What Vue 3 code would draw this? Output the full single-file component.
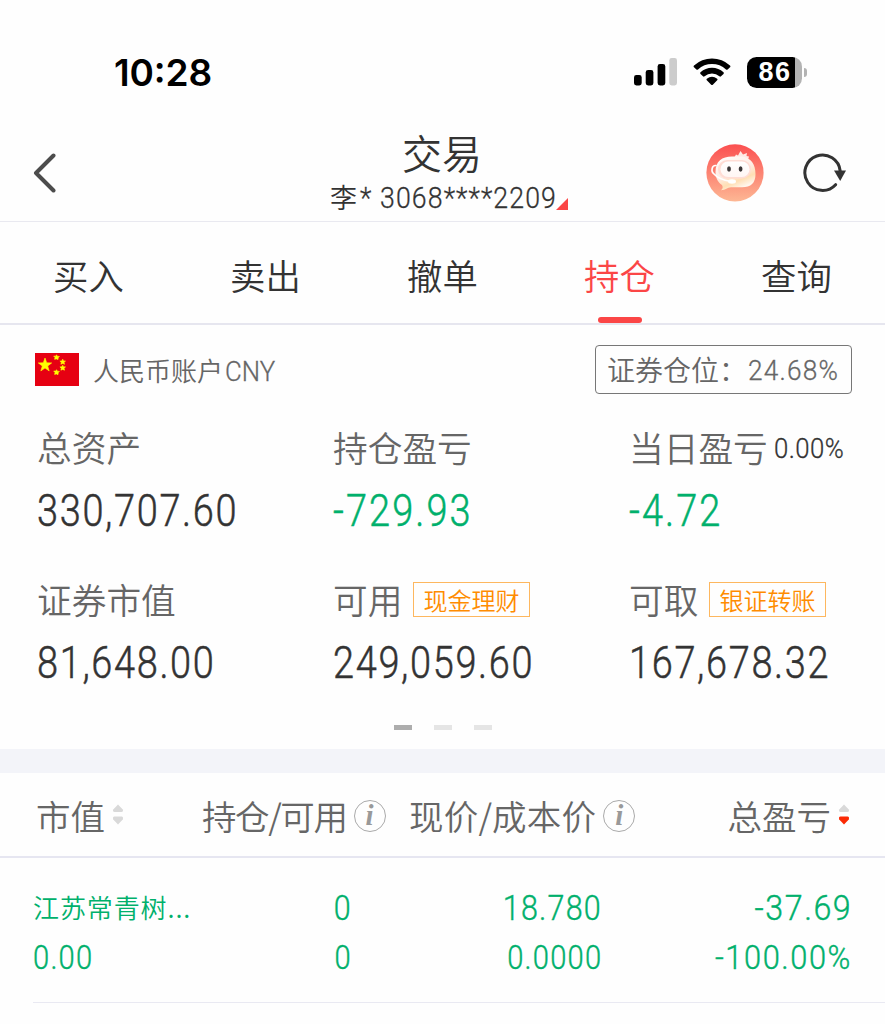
<script setup>
import { ref } from 'vue'

const tabs = ['买入', '卖出', '撤单', '持仓', '查询']
const activeTab = ref('持仓')

const assets = [
  { label: '总资产', value: '330,707.60' },
  { label: '持仓盈亏', value: '-729.93', down: true },
  { label: '当日盈亏', value: '-4.72', down: true, rate: '0.00%' },
  { label: '证券市值', value: '81,648.00' },
  { label: '可用', value: '249,059.60', action: '现金理财' },
  { label: '可取', value: '167,678.32', action: '银证转账' },
]

const positions = [
  {
    name: '江苏常青树...',
    marketValue: '0.00',
    held: '0',
    available: '0',
    price: '18.780',
    cost: '0.0000',
    profit: '-37.69',
    rate: '-100.00%',
  },
]
</script>

<template>
  <div class="page">
    <div class="status">
      <span class="time">10:28</span>
      <div class="status-icons">
        <svg class="signal" width="43" height="28" viewBox="0 0 43 28">
          <rect x="0" y="17" width="7.7" height="10.5" rx="2.4" />
          <rect x="11.7" y="12" width="7.7" height="15.5" rx="2.4" />
          <rect x="23.6" y="6" width="7.7" height="21.5" rx="2.4" />
          <rect x="35.3" y="0" width="7.7" height="27.5" rx="2.4" fill="#ccc" />
        </svg>
        <svg class="wifi" width="38" height="28" viewBox="0 0 38 28">
          <path d="M1 7.6 A26.3 26.3 0 0 1 37 7.6 Q37.8 8.4 37 9.2 L34.6 11.5 Q33.8 12.2 33 11.5 A20.8 20.8 0 0 0 5 11.5 Q4.2 12.2 3.4 11.5 L1 9.2 Q0.2 8.4 1 7.6 Z" />
          <path d="M7.5 14.3 A16.8 16.8 0 0 1 30.5 14.3 Q31.3 15.1 30.5 15.9 L28 18.3 Q27.2 19 26.4 18.3 A11.3 11.3 0 0 0 11.6 18.3 Q10.8 19 10 18.3 L7.5 15.9 Q6.7 15.1 7.5 14.3 Z" />
          <path d="M13.8 20.8 A8.4 8.4 0 0 1 24.2 20.8 Q25 21.5 24.2 22.3 L19.8 26.7 Q19 27.4 18.2 26.7 L13.8 22.3 Q13 21.5 13.8 20.8 Z" />
        </svg>
        <div class="battery">
          <div class="battery-body">86</div>
          <div class="battery-cap"></div>
        </div>
      </div>
    </div>

    <header class="header">
      <svg class="back" width="24" height="40" viewBox="0 0 24 40">
        <path d="M20.5 2.5 L3 20 L20.5 37.5" fill="none" stroke="#4c4c4c" stroke-width="4" stroke-linecap="round" stroke-linejoin="round" />
      </svg>
      <div class="heading">
        <h1>交易</h1>
        <div class="account-no">
          <span>李<i>* 3068****2209</i></span>
          <svg width="12" height="12" viewBox="0 0 12 12"><path d="M12 0 V12 H0 Z" fill="#fb4646" /></svg>
        </div>
      </div>
      <div class="header-actions">
        <svg class="robot" width="58" height="58" viewBox="0 0 58 58">
          <defs>
            <linearGradient id="robotBg" x1="0" y1="0" x2="0" y2="1">
              <stop offset="0" stop-color="#fb4f50" />
              <stop offset="1" stop-color="#fdb794" />
            </linearGradient>
            <linearGradient id="robotBody" x1="0" y1="0" x2="0.5" y2="1">
              <stop offset="0" stop-color="#fff" />
              <stop offset="0.55" stop-color="#ffece4" />
              <stop offset="0.8" stop-color="#ffdfb4" />
              <stop offset="1" stop-color="#fff6ed" />
            </linearGradient>
            <linearGradient id="robotFace" x1="0" y1="0" x2="0" y2="1">
              <stop offset="0" stop-color="#fff" />
              <stop offset="1" stop-color="#fff6f3" />
            </linearGradient>
          </defs>
          <circle cx="29" cy="28.8" r="28.6" fill="url(#robotBg)" />
          <path d="M28 14 L30 10.5 L32 11.5 L34.5 7 L37 10.5 L41 9 L40.5 12 L43 12.5 L42 16 Z" fill="#ffe9e4" />
          <path d="M26 12.5 H36 C45 14 49.5 20 49.5 30 C49.5 39 45 43.3 36 43.3 H25 C21 43.5 20 46 15 46.3 C17 44.5 17 43 16 41 C12 38.5 9.5 34 9.5 28 C9.5 17 16 12.5 26 12.5 Z" fill="url(#robotBody)" />
          <rect x="12" y="16" width="33" height="18.5" rx="9" fill="#ffddd5" />
          <rect x="14.5" y="17.5" width="29" height="15.5" rx="7.7" fill="url(#robotFace)" />
          <path d="M10 21.5 C5.5 21 5 27.5 7.5 29.5 C12 35 19 36.5 25 37.5" fill="none" stroke="#fff" stroke-width="1.6" stroke-linecap="round" />
          <ellipse cx="26" cy="37.5" rx="4" ry="2.2" fill="#fff" />
          <ellipse cx="23" cy="25" rx="1.9" ry="2.7" fill="#3b3839" />
          <ellipse cx="34.6" cy="25" rx="1.9" ry="2.7" fill="#3b3839" />
        </svg>
        <svg class="refresh" width="44" height="40" viewBox="0 0 44 40">
          <path d="M32.6 31.7 A17.7 17.7 0 1 1 37.2 18" fill="none" stroke="#333" stroke-width="3" stroke-linecap="round" />
          <path d="M31 17.5 H43 L37.2 28 Z" fill="#333" />
        </svg>
      </div>
    </header>

    <nav class="tabs">
      <button
        v-for="tab in tabs"
        :key="tab"
        class="tab"
        :class="{ active: tab === activeTab }"
        type="button"
        @click="activeTab = tab"
      >
        {{ tab }}
      </button>
    </nav>

    <section class="summary">
      <div class="currency">
        <svg class="flag" width="44" height="33" viewBox="0 0 44 33">
          <rect width="44" height="33" fill="#e60012" />
          <g fill="#ff0" stroke="#ff0" stroke-width="0.6">
            <path d="M10 5 L11.7 9.8 L16.7 9.9 L12.7 13 L14.2 17.9 L10 15 L5.8 17.9 L7.3 13 L3.3 9.9 L8.3 9.8 Z" />
            <path d="M21.5 1.8 L22.4 3.3 L24.4 3.5 L23.2 4.8 L23 6.6 L21.5 5.9 L19.6 6.3 L20 4.6 L18.7 3.1 L20.8 3.2 Z" />
            <path d="M27.7 6.2 L28.5 7.9 L30.5 8.1 L29 9.3 L29.5 11.3 L27.7 10.4 L25.9 11.3 L26.3 9.3 L24.9 8.1 L26.9 7.9 Z" />
            <path d="M27.7 12.2 L28.5 13.7 L30.5 13.9 L29 15.2 L29.5 17.2 L27.7 16.4 L25.9 17.2 L26.3 15.2 L24.9 13.9 L26.9 13.7 Z" />
            <path d="M21.5 16.7 L22.4 18.2 L24.4 18.4 L23.2 19.7 L23 21.7 L21.5 20.9 L19.6 21.4 L20 19.5 L18.7 18 L20.8 18.1 Z" />
          </g>
        </svg>
        <span class="currency-name">人民币账户<i>CNY</i></span>
        <div class="ratio"><span>证券仓位：</span><i>24.68%</i></div>
      </div>

      <div class="assets">
        <div v-for="item in assets" :key="item.label" class="asset">
          <div class="asset-label">
            <span>{{ item.label }}</span>
            <i v-if="item.rate" class="asset-rate">{{ item.rate }}</i>
            <button v-if="item.action" class="asset-action" type="button">{{ item.action }}</button>
          </div>
          <div class="asset-value" :class="{ down: item.down }">{{ item.value }}</div>
        </div>
      </div>

      <div class="dots">
        <span class="on"></span>
        <span></span>
        <span></span>
      </div>
    </section>

    <section class="positions">
      <div class="thead">
        <div class="th">
          市值
          <svg class="sort" width="12" height="22" viewBox="0 0 12 22">
            <path d="M6 0.5 L10.8 5.6 Q11.6 8 9.5 8 H2.5 Q0.4 8 1.2 5.6 Z" fill="#d9d9d9" />
            <path d="M6 20.5 L10.8 15.4 Q11.6 12.4 9.5 12.4 H2.5 Q0.4 12.4 1.2 15.4 Z" fill="#d9d9d9" />
          </svg>
        </div>
        <div class="th held">
          持仓/可用
          <span class="info">i</span>
        </div>
        <div class="th price">
          现价/成本价
          <span class="info">i</span>
        </div>
        <div class="th last">
          总盈亏
          <svg class="sort" width="12" height="22" viewBox="0 0 12 22">
            <path d="M6 0.5 L10.8 5.6 Q11.6 8 9.5 8 H2.5 Q0.4 8 1.2 5.6 Z" fill="#d9d9d9" />
            <path d="M6 20.5 L10.8 15.4 Q11.6 12.4 9.5 12.4 H2.5 Q0.4 12.4 1.2 15.4 Z" fill="#fb2a05" />
          </svg>
        </div>
      </div>

      <div v-for="row in positions" :key="row.name" class="row">
        <div class="cell first">
          <span class="name">{{ row.name }}</span>
          <span class="small">{{ row.marketValue }}</span>
        </div>
        <div class="cell">
          <span>{{ row.held }}</span>
          <span class="small">{{ row.available }}</span>
        </div>
        <div class="cell">
          <span>{{ row.price }}</span>
          <span class="small">{{ row.cost }}</span>
        </div>
        <div class="cell profit">
          <span>{{ row.profit }}</span>
          <span class="small">{{ row.rate }}</span>
        </div>
      </div>
    </section>
  </div>
</template>

<style>
body {
  background: #fefefe;
}
</style>

<style scoped>
.page {
  width: 885px;
  height: 1024px;
  overflow: hidden;
  background: #fefefe;
  color: #333;
  font-family: "Noto Sans CJK SC", sans-serif;
  font-weight: 350;
}

button {
  padding: 0;
  border: 0;
  background: none;
  color: inherit;
  font: inherit;
}

/* narrow figures: Roboto squeezed horizontally */
i,
.asset-value,
.cell span {
  display: inline-block;
  font-family: Roboto, "Noto Sans CJK SC", sans-serif;
  font-style: normal;
  font-weight: 300;
  white-space: nowrap;
  transform: scaleX(0.87);
  transform-origin: left center;
  -webkit-text-stroke: 0.5px currentColor;
}

i {
  transform: scaleX(0.92);
  -webkit-text-stroke-width: 0.3px;
}

.status {
  display: flex;
  align-items: center;
  justify-content: space-between;
  height: 124px;
  padding: 20px 78px 0 114px;
  box-sizing: border-box;
}

.time {
  color: #000;
  font-family: Inter, sans-serif;
  font-feature-settings: "case";
  font-size: 37px;
  font-weight: 600;
  letter-spacing: -0.1px;
}

.status-icons {
  display: flex;
  align-items: center;
}

.wifi {
  margin: 0 16px;
}

.battery {
  display: flex;
  align-items: center;
  gap: 2px;
}

.battery-body {
  width: 55px;
  height: 31px;
  padding-left: 1px;
  border-radius: 9.5px;
  background: linear-gradient(to right, #000 47.5px, #b3b3b3 47.5px);
  box-sizing: border-box;
  color: #fff;
  font-family: "Liberation Sans", sans-serif;
  font-size: 27px;
  font-weight: 700;
  letter-spacing: 1.5px;
  line-height: 31px;
  text-align: center;
}

.battery-cap {
  width: 3px;
  height: 9px;
  border-radius: 0 5px 5px 0;
  background: #b3b3b3;
}

.header {
  display: grid;
  grid-template-columns: 297px 238px 1fr;
  align-items: center;
  height: 98px;
  padding: 0 38px 0 33px;
  border-bottom: 1px solid #e9e9f0;
  box-sizing: border-box;
}

.heading {
  display: flex;
  flex-direction: column;
}

.heading h1 {
  margin: 0 14px 0 0;
  font-size: 40px;
  font-weight: inherit;
  line-height: 44px;
  text-align: center;
}

.account-no {
  display: flex;
  align-items: flex-end;
  height: 42px;
  font-size: 27px;
}

.account-no span {
  width: 226px;
  line-height: 36px;
  white-space: nowrap;
}

.account-no i {
  margin-left: 3px;
  font-size: 29px;
  letter-spacing: 1.2px;
}

.account-no svg {
  margin-bottom: 6px;
}

.header-actions {
  display: flex;
  align-items: center;
  justify-content: flex-end;
  gap: 39px;
}

.tabs {
  display: flex;
  height: 103px;
  border-bottom: 2px solid #e6e6ef;
  box-sizing: border-box;
}

.tab {
  display: flex;
  flex: 1;
  flex-direction: column;
  align-items: center;
  justify-content: space-between;
  padding-top: 28px;
  font-size: 35.4px;
  line-height: 50px;
}

.tab.active {
  color: #fb4646;
}

.tab.active::after {
  width: 44px;
  height: 6px;
  border-radius: 3px;
  background: #fb4646;
  content: '';
}

.summary {
  height: 448px;
  border-bottom: 24px solid #f3f4f9;
  box-sizing: border-box;
}

.currency {
  display: flex;
  align-items: center;
  height: 88px;
  padding: 0 33px 0 35px;
  color: #666;
}

.currency-name {
  flex: 1;
  margin-left: 14px;
  font-size: 26px;
}

.currency-name i {
  margin-left: 2px;
  font-size: 28px;
  letter-spacing: 0;
}

.ratio {
  display: flex;
  align-items: center;
  width: 257px;
  height: 49px;
  padding-left: 11px;
  border: 1px solid #777;
  border-radius: 4px;
  box-sizing: border-box;
  font-size: 28px;
  white-space: nowrap;
}

.ratio span {
  flex: none;
  width: 141px;
}

.ratio i {
  padding-top: 2px;
  font-size: 28.5px;
  letter-spacing: 1.3px;
}

.assets {
  display: grid;
  grid-template-columns: repeat(3, 296px);
  grid-auto-rows: 152px;
  padding-left: 37px;
}

.asset-label {
  display: flex;
  align-items: center;
  height: 68px;
  color: #666;
  font-size: 34.7px;
  white-space: nowrap;
}

.asset-rate {
  margin-left: 6px;
  padding-top: 2px;
  color: #333;
  font-size: 28px;
  letter-spacing: 0.5px;
}

.asset-action {
  height: 35px;
  margin-left: 10.5px;
  padding: 0 9.5px;
  border: 1px solid #fdb75f;
  color: #ff8c00;
  font-size: 24px;
  line-height: 31px;
}

.asset-value {
  height: 56px;
  padding-top: 3px;
  font-size: 43.6px;
  letter-spacing: 1.9px;
  line-height: 56px;
}

.asset-value.down {
  color: #00b06c;
  letter-spacing: 2.4px;
}

.dots {
  display: flex;
  justify-content: center;
  gap: 22px;
  padding-top: 8px;
}

.dots span {
  width: 18px;
  height: 5px;
  background: #e5e5e5;
}

.dots .on {
  background: #adadad;
}

.thead {
  display: flex;
  align-items: center;
  height: 85px;
  padding: 0 35px 0 36px;
  border-bottom: 2px solid #e6e6f1;
  box-sizing: border-box;
  color: #666;
  font-size: 34.5px;
}

.th {
  display: flex;
  align-items: center;
  gap: 7px;
  white-space: nowrap;
}

.th.held {
  width: 207px;
  margin-left: 78px;
  letter-spacing: -1.4px;
}

.th.price {
  letter-spacing: 0.2px;
}

.th.last {
  margin-left: auto;
}

.info {
  width: 32px;
  height: 32px;
  margin-top: 2px;
  border: 1.5px solid #aaa;
  border-radius: 50%;
  box-sizing: border-box;
  color: #999;
  font-family: "Liberation Serif", serif;
  font-size: 29px;
  font-style: italic;
  font-weight: 700;
  letter-spacing: 0;
  line-height: 28px;
  text-align: center;
}

.row {
  display: grid;
  grid-template-columns: 158px 161px 250px 249px;
  height: 145px;
  margin-left: 33px;
  padding-top: 25px;
  border-bottom: 1px solid #e9e9f2;
  box-sizing: border-box;
  color: #00b06c;
}

.cell {
  display: flex;
  flex-direction: column;
  align-items: flex-end;
}

.cell.first {
  align-items: flex-start;
}

.cell span {
  height: 50px;
  font-size: 35px;
  letter-spacing: 1.4px;
  line-height: 52px;
  transform-origin: right center;
  -webkit-text-stroke-width: 0.4px;
}

.cell .small {
  font-size: 33.5px;
  line-height: 50px;
}

.cell.profit span {
  margin-right: -1px;
  letter-spacing: 1.7px;
  transform: scaleX(0.92);
}

.cell.first span {
  transform-origin: left center;
}

.cell .name {
  font-family: "Noto Sans CJK SC", sans-serif;
  font-size: 26px;
  font-weight: 350;
  letter-spacing: 0.9px;
  line-height: 48px;
  transform: none;
  -webkit-text-stroke-width: 0;
}
</style>
